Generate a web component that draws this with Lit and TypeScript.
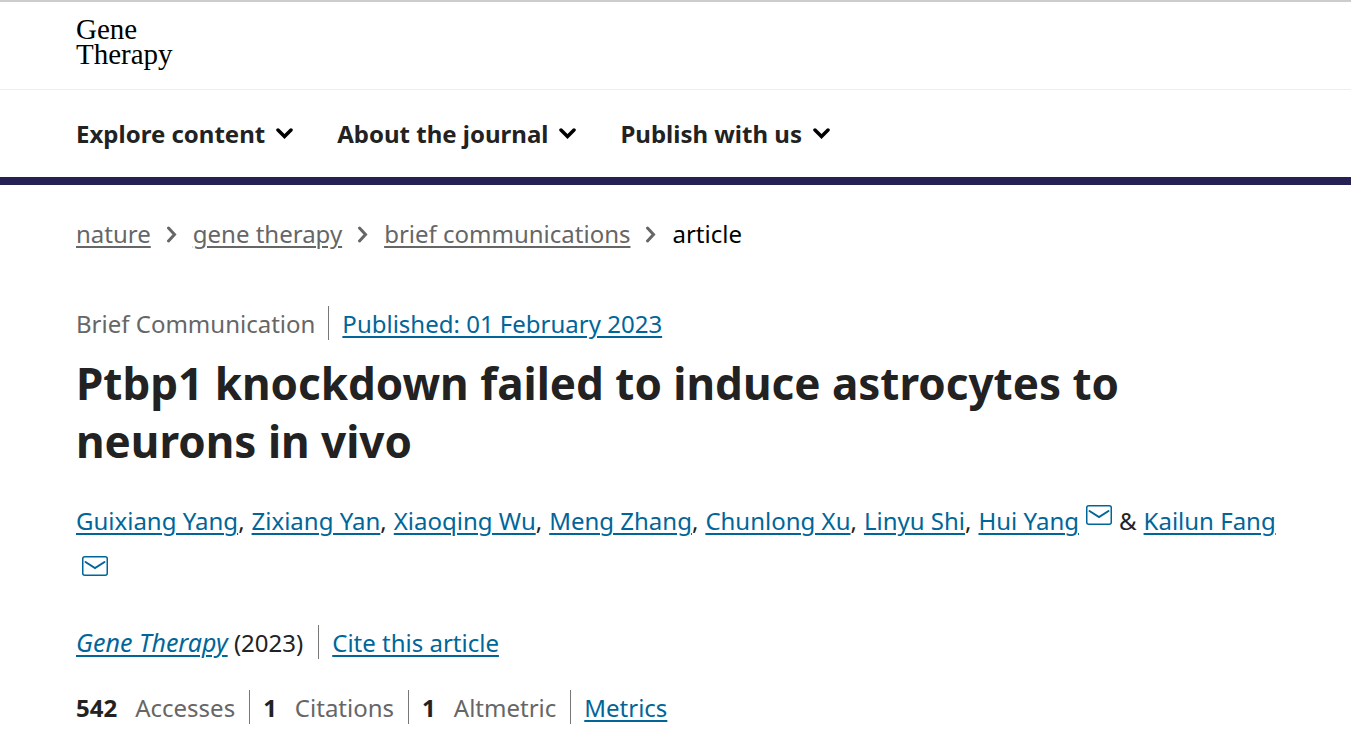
import { LitElement, html, css } from "lit";
import { customElement } from "lit/decorators.js";

const chevronDown = html`<svg class="down" viewBox="0 0 17 12" width="17" height="12" aria-hidden="true"><path d="M2 2 8.500 8.500 15 2" /></svg>`;
const chevronRight = html`<svg class="right" viewBox="0 0 11 18" width="11" height="18" aria-hidden="true"><path d="M2.500 3 8.500 9.500 2.500 16" /></svg>`;
const mail = html`<svg class="mail" viewBox="0 0 26 20" width="26" height="20" aria-hidden="true"><rect x=".75" y=".75" width="24.500" height="18.500" rx="2" /><path d="M3.500 6 13 12 22.500 6" /></svg>`;

const menus = ["Explore content", "About the journal", "Publish with us"];
const crumbs = ["nature", "gene therapy", "brief communications"];
const authors = ["Guixiang Yang", "Zixiang Yan", "Xiaoqing Wu", "Meng Zhang", "Chunlong Xu", "Linyu Shi"];

@customElement("app-root")
export class AppRoot extends LitElement {
  static styles = css`
    :host { display: block; font-family: "Noto Sans", "Open Sans", sans-serif; font-size: 24px; line-height: 34px; color: #222; background: #fff; }
    header { border-top: 2px solid #ccc; border-bottom: 8px solid #252154; }
    .brand { padding: 15px 76px 16px; border-bottom: 1px solid #eee; }
    .logo { display: block; color: #000; text-decoration: none; font-family: "Liberation Serif", serif; font-size: 29px; line-height: 25px; padding-bottom: 6px; width: min-content; }
    .menu { display: flex; flex-wrap: wrap; gap: 44px; padding: 27px 76px 26px; }
    .menu button { display: flex; align-items: center; gap: 11px; border: 0; background: none; padding: 0; font: inherit; font-weight: 700; color: #222; }
    svg { fill: none; stroke: currentColor; stroke-linecap: round; }
    .down { stroke-width: 3.5; color: #000; }
    .right { stroke-width: 3; }
    main { padding: 32px 64px 32px 76px; }
    a { color: #006699; text-decoration: underline; text-decoration-thickness: 2px; text-underline-offset: 3px; }
    ol, ul { list-style: none; margin: 0; padding: 0; display: flex; flex-wrap: wrap; }
    .crumbs li { display: flex; align-items: center; color: #000; }
    .crumbs a, .crumbs svg { color: #666; }
    .crumbs svg { margin: 0 16px 0 15px; }
    .meta { padding-top: 55px; color: #666; }
    .split li { padding-top: 2px; line-height: 32px; }
    .split li + li { border-left: 1px solid #777; margin-left: 13px; padding-left: 13px; }
    h1 { margin: 14px 0 0; font-size: 44px; line-height: 58px; font-weight: 700; }
    .authors { padding-top: 28px; column-gap: 7px; line-height: 45px; }
    .authors li { display: flex; }
    .contact a { display: flex; align-items: center; height: 45px; }
    .raised a { height: 33px; }
    .mail { stroke-width: 1.5; }
    .mail path { stroke-width: 2; }
    .contact:last-child { padding-left: 6px; }
    .journal { padding-top: 37px; align-items: flex-end; }
    .journal li + li { margin-left: 15px; }
    .stats { padding-top: 31px; color: #666; }
    .stats li + li { margin-left: 14px; }
    .stats b { color: #222; margin-right: 18px; }
    cite { font-size: 25px; line-height: 24px; }
  `;

  render() {
    return html`
      <header>
        <div class="brand"><a class="logo" href="#">Gene Therapy</a></div>
        <nav class="menu" aria-label="Journal">${menus.map((m) => html`<button type="button">${m}${chevronDown}</button>`)}</nav>
      </header>
      <main>
        <nav aria-label="Breadcrumbs"><ol class="crumbs">${crumbs.map((c) => html`<li><a href="#">${c}</a>${chevronRight}</li>`)}<li>article</li></ol></nav>
        <ul class="split meta"><li>Brief Communication</li><li><a href="#">Published: 01 February 2023</a></li></ul>
        <h1>Ptbp1 knockdown failed to induce astrocytes to neurons in vivo</h1>
        <ul class="authors">
          ${authors.map((a) => html`<li><a href="#">${a}</a><span>,</span></li>`)}
          <li><a href="#">Hui Yang</a></li>
          <li class="contact raised"><a href="#" aria-label="Email Hui Yang">${mail}</a></li>
          <li>&amp;</li>
          <li><a href="#">Kailun Fang</a></li>
          <li class="contact"><a href="#" aria-label="Email Kailun Fang">${mail}</a></li>
        </ul>
        <ul class="split journal"><li><a href="#"><cite>Gene Therapy</cite></a> (2023)</li><li><a href="#">Cite this article</a></li></ul>
        <ul class="split stats"><li><b>542</b>Accesses</li><li><b>1</b>Citations</li><li><b>1</b>Altmetric</li><li><a href="#">Metrics</a></li></ul>
      </main>`;
  }
}
